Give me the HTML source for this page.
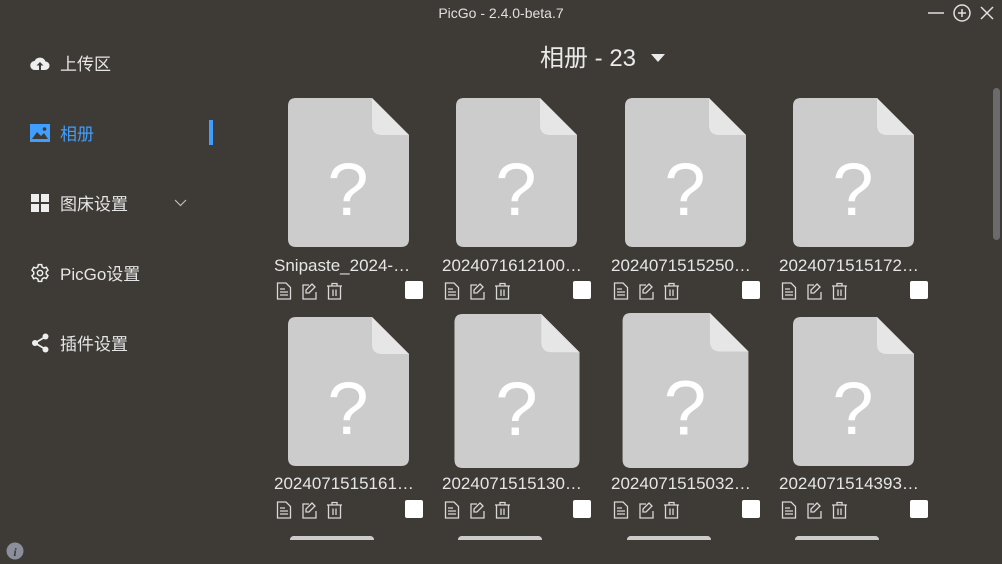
<!DOCTYPE html>
<html><head><meta charset="utf-8"><style>
*{margin:0;padding:0;box-sizing:border-box}
body{width:1002px;height:564px;background:#3e3a36;overflow:hidden;position:relative;font-family:"Liberation Sans","Noto Sans CJK SC",sans-serif;color:#e8e8e8}
.a{position:absolute}
.title{top:5px;left:0;width:1002px;text-align:center;font-size:14px;color:#e0e0e0}
.nav{left:60px;font-size:17px;color:#e6e6e6}
.name{font-size:17px;color:#e6e6e6;white-space:nowrap;width:150px}
.cb{width:18px;height:18px;background:#fff;border-radius:2px}
</style></head><body>
<div class="a title">PicGo - 2.4.0-beta.7</div>
<svg class="a" style="left:925px;top:3px" width="75" height="20" viewBox="0 0 75 20" fill="none" stroke="#e0e0e0" stroke-width="1.5">
<line x1="3" y1="10" x2="19" y2="10"/>
<circle cx="37" cy="10" r="8"/><line x1="33" y1="10" x2="41" y2="10"/><line x1="37" y1="6" x2="37" y2="14"/>
<line x1="56" y1="4" x2="68" y2="16"/><line x1="68" y1="4" x2="56" y2="16"/></svg>

<!-- sidebar -->
<svg class="a" style="left:30px;top:55px" width="20" height="18" viewBox="0 0 20 18"><path d="M5 15 A4.5 4.5 0 0 1 4.5 6 A6 6 0 0 1 15.5 6.5 A4.2 4.2 0 0 1 15 15 Z" fill="#eee"/><path d="M10 7 L6.5 10.5 H9 V15 H11 V10.5 H13.5Z" fill="#3e3a36"/></svg>
<div class="a nav" style="top:50px">上传区</div>
<svg class="a" style="left:30px;top:124px" width="20" height="18" viewBox="0 0 20 18"><rect width="20" height="18" fill="#409eff"/><path d="M2 15 L7 8 L11 12 L14 9 L18 15Z" fill="#3e3a36"/><circle cx="14.5" cy="5" r="1.8" fill="#3e3a36"/></svg>
<div class="a nav" style="top:120px;color:#409eff">相册</div>
<div class="a" style="left:209px;top:120px;width:4px;height:25px;background:#409eff"></div>
<svg class="a" style="left:31px;top:194px" width="18" height="18" viewBox="0 0 18 18" fill="#eee"><rect width="8" height="8"/><rect x="10" width="8" height="8"/><rect y="10" width="8" height="8"/><rect x="10" y="10" width="8" height="8"/></svg>
<div class="a nav" style="top:190px">图床设置</div>
<svg class="a" style="left:174px;top:199px" width="13" height="8" viewBox="0 0 13 8" fill="none" stroke="#bbb" stroke-width="1.2"><path d="M1 1 L6.5 6.5 L12 1"/></svg>
<svg class="a" style="left:30px;top:263px" width="20" height="20" viewBox="0 0 24 24" fill="none" stroke="#eee" stroke-width="1.8"><circle cx="12" cy="12" r="3.2"/><path d="M10 2h4l.6 2.8 2.3 1.3 2.7-.9 2 3.5-2.1 1.9v2.6l2.1 1.9-2 3.5-2.7-.9-2.3 1.3L14 22h-4l-.6-2.8-2.3-1.3-2.7.9-2-3.5 2.1-1.9v-2.6L2.4 8.7l2-3.5 2.7.9 2.3-1.3Z"/></svg>
<div class="a nav" style="top:260px">PicGo设置</div>
<svg class="a" style="left:31px;top:333px" width="18" height="20" viewBox="0 0 18 20" fill="#eee" stroke="#eee" stroke-width="1.8"><line x1="4" y1="10" x2="14" y2="4"/><line x1="4" y1="10" x2="14" y2="16"/><circle cx="4" cy="10" r="3" stroke="none"/><circle cx="14.5" cy="3.5" r="3" stroke="none"/><circle cx="14.5" cy="16.5" r="3" stroke="none"/></svg>
<div class="a nav" style="top:330px">插件设置</div>
<svg class="a" style="left:6px;top:542px" width="18" height="18" viewBox="0 0 18 18"><circle cx="9" cy="9" r="8.5" fill="#8b8f9c"/><text x="9" y="14" font-size="12" font-style="italic" font-weight="bold" text-anchor="middle" fill="#3e3a36" font-family="Liberation Serif">i</text></svg>

<!-- header -->
<div class="a" style="left:540px;top:38px;font-size:24px;color:#eaeaea">相册 - 23</div>
<svg class="a" style="left:650px;top:53px" width="16" height="10" viewBox="0 0 16 10"><path d="M1 1H15L8 9Z" fill="#eaeaea"/></svg>
<div class="a" style="left:993px;top:88px;width:7px;height:152px;background:#6b6b6b;border-radius:4px"></div>

<svg width="0" height="0" style="position:absolute"><defs>
<symbol id="f" viewBox="0 0 121 149"><path d="M8 0H84L121 37V141Q121 149 113 149H8Q0 149 0 141V8Q0 0 8 0Z" fill="#cccccc"/><path d="M84 0V27Q84 37 94 37H121Z" fill="#e6e6e6"/><text x="60" y="117" font-size="74" text-anchor="middle" fill="#fff" font-family="Liberation Sans">?</text></symbol>
<symbol id="act" viewBox="0 0 68 18" fill="none" stroke="#d8d8d8" stroke-width="1.3"><path d="M1.5 1H10L14.5 5.5V17H1.5Z"/><path d="M4 7H9M4 10H12M4 13H12"/><path d="M33 3H27V17H40V10"/><path d="M36 2L39 5L33 11H30V8Z"/><path d="M51 4H66M56 4V1.5H61V4M52.5 4V17H64.5V4M57 7.5V14M60 7.5V14"/></symbol>
</defs></svg>

<div id="g"></div>
<script>
var names=["Snipaste_2024-…","2024071612100…","2024071515250…","2024071515172…","2024071515161…","2024071515130…","2024071515032…","2024071514393…"];
var xs=[274,442,611,779],h="";
for(var i=0;i<8;i++){var r=i>>2,c=i%4,x=xs[c],y=r?317:98;
var fx=x+14,fy=y,fw=121,fh=149;
if(i==5){fx=x+12;fy=314;fw=126;fh=154}
if(i==6){fx=x+11;fy=313;fw=127;fh=155}
h+='<svg class="a" style="left:'+fx+'px;top:'+fy+'px" width="'+fw+'" height="'+fh+'"><use href="#f"/></svg>';
var ny=r?474:256;
h+='<div class="a name" style="left:'+x+'px;top:'+ny+'px">'+names[i]+'</div>';
var ay=r?501:282;
h+='<svg class="a" style="left:'+(x+2)+'px;top:'+ay+'px" width="68" height="18"><use href="#act"/></svg>';
h+='<div class="a cb" style="left:'+(x+131)+'px;top:'+(ay-1)+'px"></div>';
h+='<div class="a" style="left:'+(x+16)+'px;top:536px;width:84px;height:4px;background:#cccccc;border-radius:4px 4px 0 0"></div>';}
document.getElementById('g').innerHTML=h;
</script>
</body></html>
